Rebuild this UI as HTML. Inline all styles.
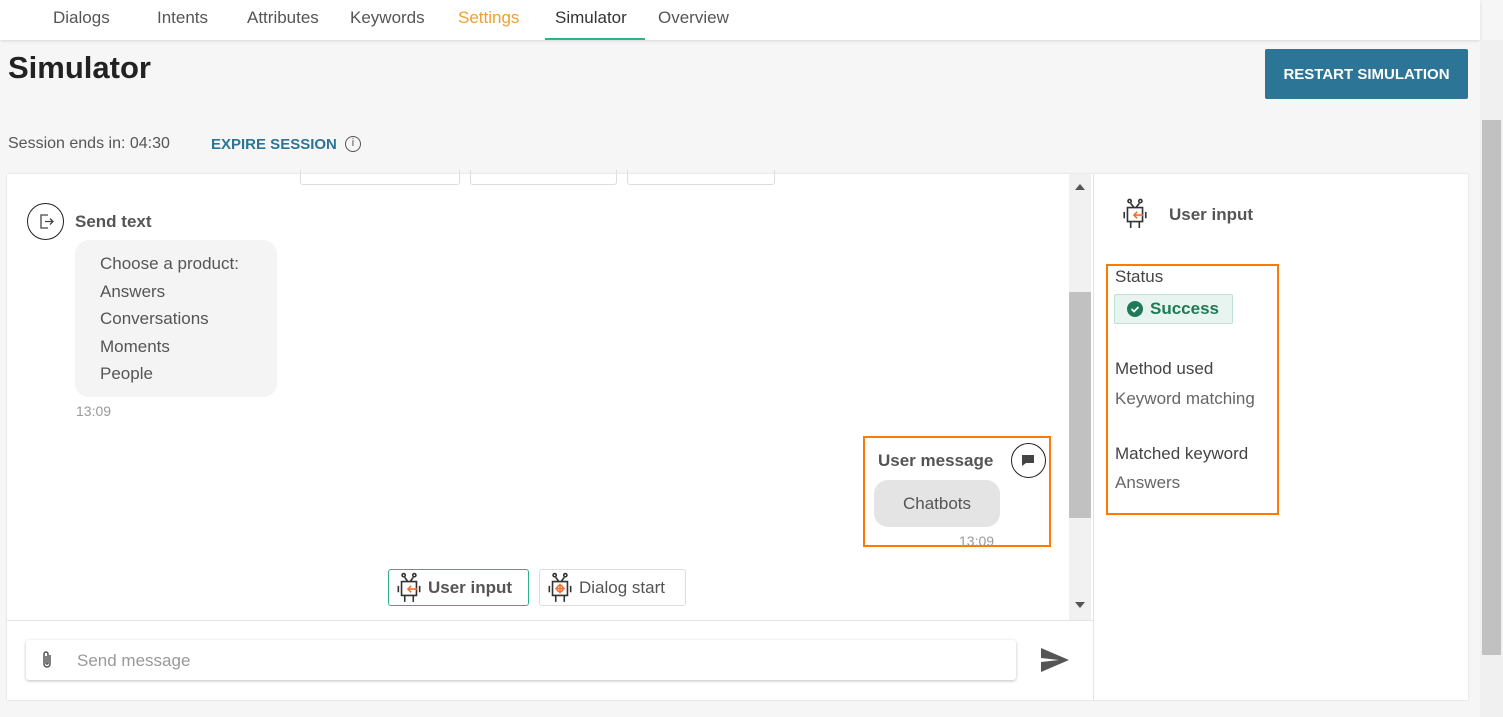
<!DOCTYPE html>
<html><head><style>
*{box-sizing:border-box;margin:0;padding:0}
body{width:1503px;height:717px;overflow:hidden;background:#f6f6f6;font-family:"Liberation Sans",sans-serif;color:#444;position:relative}
.abs{position:absolute}
.nav{left:0;top:0;width:1480px;height:40px;background:#fff;box-shadow:0 1px 3px rgba(0,0,0,.12)}
.nav span{position:absolute;top:8px;font-size:17px;color:#555}
.chip{position:absolute;border:1px solid #ddd;border-radius:3px;background:#fff;height:37px;font-size:17px;display:flex;align-items:center;gap:5px;padding-left:6px;color:#555}
</style></head><body>
<div class="abs nav">
<span style="left:53px">Dialogs</span><span style="left:157px">Intents</span><span style="left:247px">Attributes</span><span style="left:350px">Keywords</span><span style="left:458px;color:#f0a030">Settings</span><span style="left:555px;color:#333">Simulator</span><span style="left:658px">Overview</span>
<div class="abs" style="left:545px;top:38px;width:100px;height:2px;background:#2bb38a"></div>
</div>
<div class="abs" style="left:1480px;top:40px;width:23px;height:677px;background:#f0f0f0"></div>
<div class="abs" style="left:1482px;top:120px;width:19px;height:535px;background:#c1c1c1"></div>
<div class="abs" style="left:8px;top:50px;font-size:31px;font-weight:bold;color:#222">Simulator</div>
<div class="abs" style="left:1265px;top:49px;width:203px;height:50px;background:#2c7597;color:#fff;font-weight:bold;font-size:15px;display:flex;align-items:center;justify-content:center;border-radius:2px">RESTART SIMULATION</div>
<div class="abs" style="left:8px;top:135px;font-size:16px;color:#555">Session ends in: 04:30</div>
<div class="abs" style="left:211px;top:136px;font-size:15px;font-weight:bold;color:#2c7597">EXPIRE SESSION</div>
<div class="abs" style="left:345px;top:136px;width:16px;height:16px;border:1.5px solid #555;border-radius:50%;font-size:11px;text-align:center;line-height:13px;color:#555">i</div>
<div class="abs" style="left:7px;top:174px;width:1461px;height:526px;background:#fff;box-shadow:0 0 2px rgba(0,0,0,.15)"></div>
<div class="abs" style="left:1093px;top:174px;width:1px;height:526px;background:#e5e5e5"></div>
<div class="abs" style="left:7px;top:620px;width:1086px;height:1px;background:#e5e5e5"></div>
<div class="abs" style="left:1069px;top:174px;width:22px;height:446px;background:#f1f1f1"></div>
<div class="abs" style="left:1069px;top:292px;width:22px;height:226px;background:#c1c1c1"></div>
<div class="abs" style="left:1075px;top:184px;border:5px solid transparent;border-bottom:6px solid #555;border-top:0"></div>
<div class="abs" style="left:1075px;top:602px;border:5px solid transparent;border-top:6px solid #555;border-bottom:0"></div>
<div class="abs" style="left:300px;top:170px;width:160px;height:15px;border:1px solid #ddd;border-top:0;border-radius:0 0 3px 3px"></div>
<div class="abs" style="left:470px;top:170px;width:147px;height:15px;border:1px solid #ddd;border-top:0;border-radius:0 0 3px 3px"></div>
<div class="abs" style="left:627px;top:170px;width:148px;height:15px;border:1px solid #ddd;border-top:0;border-radius:0 0 3px 3px"></div>
<div class="abs" style="left:27px;top:203px;width:37px;height:37px;border:1.5px solid #222;border-radius:50%"><svg width="34" height="34" viewBox="0 0 34 34" fill="none" stroke="#444" stroke-width="1.3"><path d="M20 11h-7v13h7M17 17.5h8M22 14.5l3 3-3 3"/></svg></div>
<div class="abs" style="left:75px;top:212px;font-size:17px;font-weight:bold;color:#555">Send text</div>
<div class="abs" style="left:75px;top:240px;width:202px;height:157px;background:#f4f4f4;border-radius:14px;padding:10px 0 0 25px;font-size:17px;line-height:27.5px;color:#555">Choose a product:<br>Answers<br>Conversations<br>Moments<br>People</div>
<div class="abs" style="left:76px;top:403px;font-size:14px;color:#999">13:09</div>
<div class="abs" style="left:863px;top:436px;width:188px;height:111px;border:2px solid #ff7a00"></div>
<div class="abs" style="left:878px;top:451px;font-size:17px;font-weight:bold;color:#555">User message</div>
<div class="abs" style="left:1011px;top:443px;width:35px;height:35px;border:1.5px solid #222;border-radius:50%"><svg width="32" height="32" viewBox="0 0 32 32"><path d="M10 11h12v8h-8l-4 3z" fill="#444"/></svg></div>
<div class="abs" style="left:874px;top:480px;width:126px;height:47px;background:#e4e4e4;border-radius:14px;font-size:17px;color:#555;display:flex;align-items:center;justify-content:center">Chatbots</div>
<div class="abs" style="left:959px;top:533px;font-size:14px;color:#999">13:09</div>
<div class="chip" style="left:388px;top:569px;width:141px;border-color:#2bb38a;font-weight:bold;color:#555"><svg width="28" height="32" viewBox="0 0 26 30" fill="none" stroke="#333" stroke-width="1.5"><circle cx="8" cy="3" r="1.5"/><circle cx="18" cy="3" r="1.5"/><path d="M9 5l3 4M17 5l-3 4M6 9h14v13H6zM3 13v6M23 13v6M9 22v6M17 22v6"/><path d="M21 16h-9M15 13l-3 3 3 3" stroke="#f07030"/></svg>User input</div>
<div class="chip" style="left:539px;top:569px;width:147px"><svg width="28" height="32" viewBox="0 0 26 30" fill="none" stroke="#333" stroke-width="1.5"><circle cx="8" cy="3" r="1.5"/><circle cx="18" cy="3" r="1.5"/><path d="M9 5l3 4M17 5l-3 4M6 9h14v13H6zM3 13v6M23 13v6M9 22v6M17 22v6"/><circle cx="13" cy="15.5" r="3" stroke="#f07030"/><path d="M13 11v9M8.5 15.5h9" stroke="#f07030"/></svg>Dialog start</div>
<div class="abs" style="left:26px;top:640px;width:990px;height:40px;background:#fff;border-radius:3px;box-shadow:0 1px 3px rgba(0,0,0,.25)"></div>
<svg class="abs" style="left:40px;top:650px" width="14" height="20" viewBox="0 0 14 20" fill="none" stroke="#555" stroke-width="1.5"><path d="M10 5v9a3 3 0 0 1-6 0V4a2 2 0 0 1 4 0v9a1 1 0 0 1-2 0V6"/></svg>
<div class="abs" style="left:77px;top:651px;font-size:17px;color:#999">Send message</div>
<svg class="abs" style="left:1040px;top:647px" width="30" height="26" viewBox="0 0 30 26"><path d="M1 1l28 12L1 25V15l18-2L1 11z" fill="#555"/></svg>
<svg class="abs" style="left:1121px;top:197px" width="28" height="34" viewBox="0 0 26 30" fill="none" stroke="#333" stroke-width="1.5"><circle cx="8" cy="3" r="1.5"/><circle cx="18" cy="3" r="1.5"/><path d="M9 5l3 4M17 5l-3 4M6 9h14v13H6zM3 13v6M23 13v6M9 22v6M17 22v6"/><path d="M21 16h-9M15 13l-3 3 3 3" stroke="#f07030"/></svg>
<div class="abs" style="left:1169px;top:205px;font-size:17px;font-weight:bold;color:#555">User input</div>
<div class="abs" style="left:1106px;top:264px;width:173px;height:251px;border:2px solid #ff7a00"></div>
<div class="abs" style="left:1115px;top:267px;font-size:17px;color:#444">Status</div>
<div class="abs" style="left:1114px;top:294px;width:119px;height:30px;background:#e8f4ef;border:1px solid #bfe0d2;border-radius:2px;display:flex;align-items:center;gap:7px;padding-left:12px;font-size:17px;font-weight:bold;color:#1f7a57"><svg width="16" height="16" viewBox="0 0 16 16"><circle cx="8" cy="8" r="8" fill="#1f7a57"/><path d="M4.5 8l2.5 2.5 4.5-4.5" stroke="#fff" stroke-width="1.8" fill="none"/></svg>Success</div>
<div class="abs" style="left:1115px;top:359px;font-size:17px;color:#444">Method used</div>
<div class="abs" style="left:1115px;top:389px;font-size:17px;color:#666">Keyword matching</div>
<div class="abs" style="left:1115px;top:444px;font-size:17px;color:#444">Matched keyword</div>
<div class="abs" style="left:1115px;top:473px;font-size:17px;color:#666">Answers</div>
</body></html>
